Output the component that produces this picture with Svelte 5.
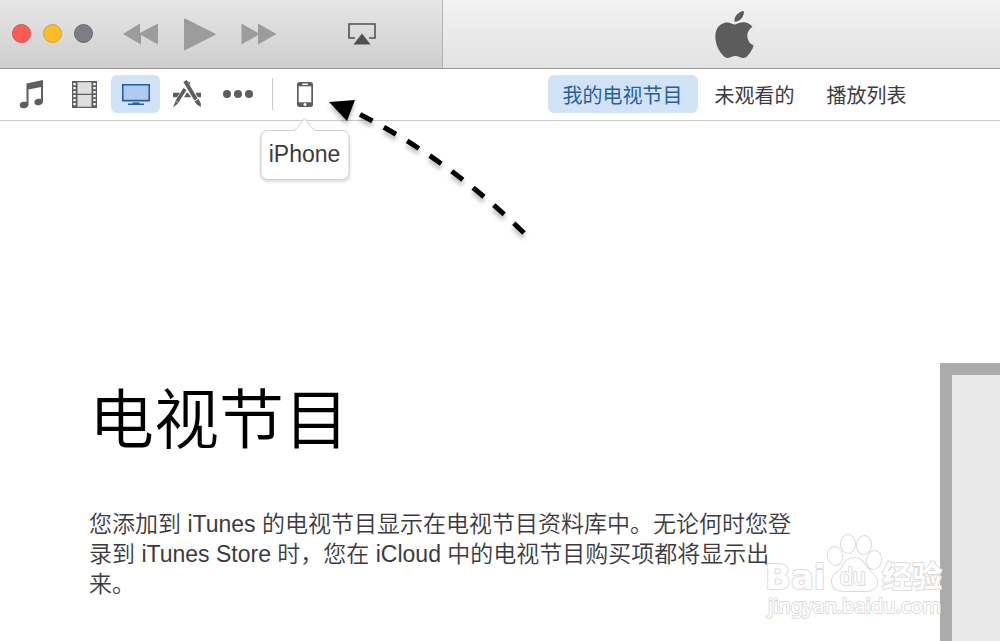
<script lang="ts">
	type Tab = { id: string; label: string };

	const tabs: Array<Tab> = [
		{ id: 'mine', label: '我的电视节目' },
		{ id: 'unwatched', label: '未观看的' },
		{ id: 'playlists', label: '播放列表' }
	];
	const holes = [2, 6, 10, 14, 18, 22];

	let activeTab = $state('mine');
	let activeMedia = $state('tv');
</script>

<div class="window">
	<header class="titlebar">
		<div class="playback">
			<div class="lights">
				<button class="light red" aria-label="关闭"></button>
				<button class="light yellow" aria-label="最小化"></button>
				<button class="light gray" aria-label="缩放"></button>
			</div>
			<div class="transport">
				<button aria-label="上一首">
					<svg width="36" height="22" viewBox="0 0 36 22"><path d="M0 11 17 .5V10L35 .5v21L18 12v9.500z" /></svg>
				</button>
				<button aria-label="播放">
					<svg width="32" height="33" viewBox="0 0 32 33"><path d="M0 1.500Q0 0 1.500.7L31 15.500q1 .7 0 1.400L1.500 32Q0 32.700 0 31z" /></svg>
				</button>
				<button aria-label="下一首">
					<svg width="36" height="22" viewBox="0 0 36 22"><path d="M35.500 11 17 .5V10L.5.5v21L17 12v9.500z" /></svg>
				</button>
			</div>
			<button class="airplay" aria-label="AirPlay">
				<svg width="28" height="22" viewBox="0 0 28 22">
					<path d="M7 15H1V1h26v14h-6" fill="none" stroke="#505050" stroke-width="1.600" />
					<path d="M14 10.500 22.500 21.500h-17z" fill="#505050" />
				</svg>
			</button>
		</div>
		<div class="lcd">
			<svg width="47" height="47" viewBox="0 0 24 24" aria-hidden="true">
				<path fill="#5c5c5c" d="M12.152 6.896c-.948 0-2.415-1.078-3.960-1.040-2.040.027-3.910 1.183-4.961 3.014-2.117 3.675-.546 9.103 1.519 12.090 1.013 1.454 2.208 3.090 3.792 3.039 1.520-.065 2.090-.987 3.935-.987 1.831 0 2.350.987 3.960.948 1.637-.026 2.676-1.480 3.676-2.948 1.156-1.688 1.636-3.325 1.662-3.415-.039-.013-3.182-1.221-3.220-4.857-.026-3.040 2.480-4.494 2.597-4.559-1.429-2.090-3.623-2.324-4.390-2.376-2-.156-3.675 1.090-4.610 1.090zM15.530 3.830c.843-1.012 1.400-2.427 1.245-3.830-1.207.052-2.662.805-3.532 1.818-.780.896-1.454 2.338-1.273 3.714 1.338.104 2.715-.688 3.559-1.701" />
			</svg>
		</div>
	</header>

	<div class="toolbar">
		<nav class="media">
			<button class:active={activeMedia == 'music'} onclick={() => (activeMedia = 'music')} aria-label="音乐">
				<svg width="32" height="30" viewBox="0 0 32 30" fill="#5e5e5e">
					<path d="M8.500 4.500 25 1v21.500h-2V8L10.500 10.500V26h-2z" />
					<ellipse cx="6" cy="26" rx="4.300" ry="3.200" transform="rotate(-12 6 26)" />
					<ellipse cx="20.700" cy="23" rx="4.300" ry="3.200" transform="rotate(-12 20.700 23)" />
				</svg>
			</button>
			<button class:active={activeMedia == 'film'} onclick={() => (activeMedia = 'film')} aria-label="影片">
				<svg width="25" height="27" viewBox="0 0 25 27">
					<path fill="#5e5e5e" d="M0 0h25v27H0z" />
					<path fill="#dedede" d="M5.500 1.300h14v11.500h-14zM5.500 14h14v11.700h-14z" />
					{#each holes as y}
						<path fill="#fff" d="M1.300 {y}h2.400v2.300H1.300zM21.300 {y}h2.400v2.300h-2.400z" />
					{/each}
				</svg>
			</button>
			<button class:active={activeMedia == 'tv'} onclick={() => (activeMedia = 'tv')} aria-label="电视节目">
				<svg width="28" height="22" viewBox="0 0 28 22">
					<path d="M.8 1.800h26.400v15.800H.8z" fill="#aecbef" stroke="#275f9d" stroke-width="1.600" />
					<path d="M10.500 19.500h7v1H22V22H6v-1.500h4.500z" fill="#275f9d" />
				</svg>
			</button>
			<button class:active={activeMedia == 'apps'} onclick={() => (activeMedia = 'apps')} aria-label="应用程序">
				<svg width="30" height="28" viewBox="0 0 30 28">
					<path d="M1 15h9M12 15h8M24 15h5" stroke="#5e5e5e" stroke-width="4.500" />
					<path d="M15.500 6 5 23" stroke="#fff" stroke-width="6" />
					<path d="m17 2-3 5.500M13 9 5 21.500" stroke="#5e5e5e" stroke-width="3.600" />
					<path d="m3.500 21 3 2L1 27.500z" fill="#5e5e5e" />
					<path d="m14 4 11.500 18" stroke="#fff" stroke-width="6" />
					<path d="m13 1 11 18.500" stroke="#5e5e5e" stroke-width="3.800" />
					<path d="m22.500 21.500 4-2.500q2.500 3 2.500 8-4-1.500-6.500-5.500z" fill="#5e5e5e" />
				</svg>
			</button>
			<button class:active={activeMedia == 'more'} onclick={() => (activeMedia = 'more')} aria-label="更多">
				<svg width="30" height="10" viewBox="0 0 30 10" fill="#5e5e5e">
					<circle cx="4" cy="5" r="4" /><circle cx="15" cy="5" r="4" /><circle cx="26" cy="5" r="4" />
				</svg>
			</button>
			<span class="divider"></span>
			<div class="device">
				<button aria-describedby="device-tip" aria-label="iPhone">
					<svg width="16" height="25" viewBox="0 0 16 25">
						<rect width="16" height="25" rx="2.500" fill="#5e5e5e" />
						<path d="M1.700 4.300h12.600v16H1.700z" fill="#fff" />
						<rect x="5" y="1.500" width="6" height="1.500" rx=".7" fill="#fff" />
						<circle cx="8" cy="22.500" r="1.500" fill="#fff" />
					</svg>
				</button>
				<div class="tip" id="device-tip" role="tooltip">
					<svg width="24" height="13" viewBox="0 0 24 13" aria-hidden="true">
						<path d="M0 12.500Q3 12 5 9.500L10.500 2q1.500-1.800 3 0L19 9.500q2 2.500 5 3V13H0z" fill="#fff" />
						<path d="M0 12.500Q3 12 5 9.500L10.500 2q1.500-1.800 3 0L19 9.500q2 2.500 5 3" fill="none" stroke="#d0d0d0" />
					</svg>
					iPhone
				</div>
				<!-- dashed pointer towards the device button -->
				<svg class="pointer" width="210" height="150" viewBox="325 95 210 150" aria-hidden="true">
					<path d="M524 233Q447 158 357 113" fill="none" stroke="#000" stroke-width="5" stroke-dasharray="14 13" />
					<path d="m329 102 26-2-8 21z" />
				</svg>
			</div>
		</nav>
		<nav class="tabs">
			{#each tabs as tab}
				<button class:active={activeTab == tab.id} onclick={() => (activeTab = tab.id)}>{tab.label}</button>
			{/each}
		</nav>
	</div>

	<main>
		<section class="intro">
			<h1>电视节目</h1>
			<p>您添加到 iTunes 的电视节目显示在电视节目资料库中。无论何时您登录到 iTunes Store 时，您在 iCloud 中的电视节目购买项都将显示出来。</p>
		</section>
		<div class="artwork"></div>

		<svg class="watermark" width="190" height="96" viewBox="0 0 190 96" role="img" aria-label="Baidu 经验">
			<g class="outlined">
				<text class="wide" x="5" y="56" font-size="34" font-weight="700">Bai</text>
				<ellipse cx="75" cy="23" rx="7" ry="9" transform="rotate(-10 75 23)" />
				<ellipse cx="88" cy="11" rx="7" ry="9" />
				<ellipse cx="104" cy="12" rx="7" ry="9" transform="rotate(10 104 12)" />
				<ellipse cx="114" cy="27" rx="7" ry="9" transform="rotate(10 114 27)" />
				<path d="M94 25c8 0 11 7 15 12 5 5 9 8 8 13-1 8-8 8-14 8H84c-7 0-12-3-12-10 0-6 5-8 9-12 3-5 6-11 13-11z" />
				<text x="80" y="52" font-size="23">du</text>
				<text class="cjk" x="122" y="54" font-size="30" font-weight="700">经验</text>
				<text class="url" x="8" y="80" font-size="20">jingyan.baidu.com</text>
			</g>
		</svg>
	</main>
</div>

<style>
	:global(body) {
		margin: 0;
		background: #fff;
	}
	.window {
		position: relative;
		display: flex;
		flex-direction: column;
		min-height: 100vh;
		overflow: hidden;
		font-family: "Liberation Sans", "Noto Sans CJK SC", sans-serif;
		color: #3c3a3e;
	}
	button {
		display: flex;
		align-items: center;
		justify-content: center;
		padding: 0;
		border: 0;
		background: none;
		color: inherit;
		font: inherit;
	}
	svg {
		display: block;
	}

	.titlebar {
		display: flex;
		height: 68px;
		border-bottom: 1px solid #999;
	}
	.playback {
		display: flex;
		align-items: center;
		box-sizing: border-box;
		flex: 0 0 443px;
		padding-left: 12px;
		border-right: 1px solid #b4b4b4;
		background: linear-gradient(#e6e6e6, #cecece);
	}
	.lights {
		display: flex;
		gap: 12px;
		padding-bottom: 2px;
	}
	.light {
		box-sizing: border-box;
		width: 19px;
		height: 19px;
		border-radius: 50%;
	}
	.red {
		border: 1px solid #df4744;
		background: #fd5b57;
	}
	.yellow {
		border: 1px solid #dfa023;
		background: #fdbc2c;
	}
	.gray {
		border: 1px solid #68686e;
		background: #7d7d84;
	}
	.transport {
		display: flex;
		gap: 25px;
		margin-left: 30px;
		fill: #9c9c9c;
	}
	.airplay {
		margin-left: 71px;
	}
	.lcd {
		display: flex;
		flex: 1;
		align-items: center;
		justify-content: center;
		padding-left: 26px;
		background: linear-gradient(#f2f2f2, #e2e2e2);
	}

	.toolbar {
		display: flex;
		align-items: center;
		height: 50px;
		padding-bottom: 1px;
		border-bottom: 1px solid #cacaca;
	}
	.media {
		display: flex;
		align-items: center;
		box-sizing: border-box;
		flex: 0 0 443px;
		gap: 2px;
		padding-left: 9px;
	}
	.media button {
		width: 49px;
		height: 38px;
		border-radius: 6px;
	}
	.media .active,
	.tabs .active {
		background: #d2e3f8;
	}
	.divider {
		width: 1px;
		height: 32px;
		margin: 0 5px 0 8px;
		background: #c8c8c8;
	}
	.device {
		position: relative;
	}
	.tip {
		position: absolute;
		top: 55px;
		left: 50%;
		box-sizing: border-box;
		width: 89px;
		height: 50px;
		transform: translateX(-50%);
		border: 1px solid #d0d0d0;
		border-radius: 7px;
		background: #fff;
		box-shadow: 0 2px 3px #0002;
		font-size: 23px;
		line-height: 46px;
		text-align: center;
	}
	.tip svg {
		position: absolute;
		top: -13px;
		left: 50%;
		transform: translateX(-50%);
	}
	.pointer {
		position: absolute;
		top: 20px;
		left: 45px;
		filter: drop-shadow(0 4px 2px #0004);
	}
	.tabs {
		display: flex;
		flex: 1;
		justify-content: center;
		gap: 2px;
		padding-left: 26px;
		font-size: 20px;
	}
	.tabs button {
		height: 38px;
		padding: 0 15px;
		border-radius: 6px;
		white-space: nowrap;
	}
	.tabs .active {
		color: #275f9d;
	}

	main {
		position: relative;
		display: flex;
		flex: 1;
		justify-content: space-between;
		padding-left: 89px;
	}
	.intro {
		max-width: 706px;
		padding-top: 252px;
	}
	h1 {
		margin: 0;
		color: #000;
		font-size: 65px;
		font-weight: 350;
		line-height: 96px;
	}
	p {
		margin: 40px 0 0;
		font-size: 23px;
		font-weight: 350;
		line-height: 30px;
	}
	.artwork {
		box-sizing: border-box;
		flex: 0 0 60px;
		margin-top: 242px;
		border: solid #ababab;
		border-width: 12px 0 0 12px;
		background: #e9e9e9;
	}
	.watermark {
		position: absolute;
		right: 50px;
		bottom: 12px;
	}
	.outlined {
		fill: #fff;
		stroke: #dcdcdc;
		stroke-width: 2px;
		stroke-linejoin: round;
		paint-order: stroke;
	}
	.wide {
		font-family: "DejaVu Sans", sans-serif;
	}
	.url {
		font-family: "Noto Sans", sans-serif;
	}
	.cjk {
		font-family: "Noto Sans CJK SC", sans-serif;
	}
</style>
